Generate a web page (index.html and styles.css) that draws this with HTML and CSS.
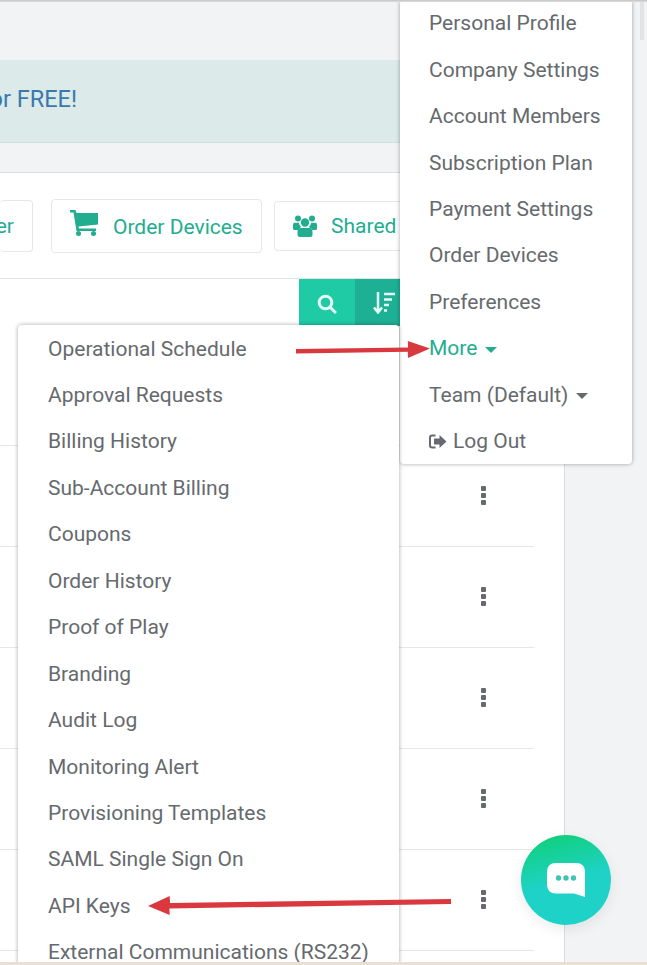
FILE: index.html
```html
<!DOCTYPE html>
<html lang="en">
<head>
<meta charset="utf-8">
<title>Account menu</title>
<link rel="stylesheet" href="styles.css">
</head>
<body>
<div class="page">
  <div class="topline"></div>
  <section class="banner"><p class="banner-text"><span>or FREE!</span></p></section>
  <main class="panel">
    <div class="toolbar">
      <a class="tool tool-first"><span>er</span></a>
      <a class="tool tool-order">
        <svg class="cart" viewBox="0 0 28 26"><path d="M0 0h5.500l1 3H28v11.500L8.500 16.500l.4 2H26v2.500H6.500L3.500 2.500H0z"/><circle cx="8.500" cy="23.500" r="2.500"/><circle cx="23.500" cy="23.500" r="2.500"/></svg>
        <span class="tool-label">Order Devices</span>
      </a>
      <a class="tool tool-shared">
        <svg class="users" viewBox="0 0 24 22"><circle cx="5" cy="3.500" r="3"/><circle cx="19" cy="3.500" r="3"/><circle cx="12" cy="7.500" r="4.200"/><path d="M0 9.500q0-1.800 1.800-1.800h4q.6 3 2.500 4.400Q5.500 13 4.900 15H1.500Q0 15 0 13.500zM24 9.500q0-1.800-1.800-1.800h-4q-.6 3-2.500 4.400 2.800.9 3.400 2.900h3.400q1.500 0 1.500-1.500zM7.500 13h9q3 0 3 4v2.500q0 2.500-2.500 2.500H7q-2.500 0-2.500-2.500V17q0-4 3-4z"/></svg>
        <span>Shared</span>
      </a>
    </div>
    <div class="table-head">
      <button class="head-btn head-search" aria-label="Search">
        <svg viewBox="0 0 20 20"><circle cx="8.500" cy="8.500" r="6.300"/><path d="M13 13l6 6"/></svg>
      </button>
      <button class="head-btn head-sort" aria-label="Sort">
        <svg viewBox="0 0 22 22"><path d="M5 0v19M1 15.500L5 20.500l4-5"/><path class="bars" d="M11 2h11M11 7.500h8M11 13h5M11 18.500h3"/></svg>
      </button>
    </div>
    <div class="row row-first"></div>
    <div class="row"><button class="kebab" aria-label="Actions"><i></i><i></i><i></i></button></div>
    <div class="row"><button class="kebab" aria-label="Actions"><i></i><i></i><i></i></button></div>
    <div class="row"><button class="kebab" aria-label="Actions"><i></i><i></i><i></i></button></div>
    <div class="row"><button class="kebab" aria-label="Actions"><i></i><i></i><i></i></button></div>
    <div class="row"><button class="kebab" aria-label="Actions"><i></i><i></i><i></i></button></div>
  </main>

  <nav class="menu menu-account">
    <a>Personal Profile</a>
    <a>Company Settings</a>
    <a>Account Members</a>
    <a>Subscription Plan</a>
    <a>Payment Settings</a>
    <a>Order Devices</a>
    <a>Preferences</a>
    <a class="active">More <b class="caret"></b></a>
    <a>Team (Default) <b class="caret"></b></a>
    <a class="logout">
      <svg viewBox="0 0 18 15"><path class="door" d="M6.500 1.500H3.200Q1 1.500 1 3.700v7.600q0 2.200 2.200 2.200h3.300"/><path d="M10.500 1l7 6.500-7 6.500V10.500H5v-6h5.500z"/></svg>
      Log Out
    </a>
  </nav>

  <nav class="menu menu-more">
    <a>Operational Schedule</a>
    <a>Approval Requests</a>
    <a>Billing History</a>
    <a>Sub-Account Billing</a>
    <a>Coupons</a>
    <a>Order History</a>
    <a>Proof of Play</a>
    <a>Branding</a>
    <a>Audit Log</a>
    <a>Monitoring Alert</a>
    <a>Provisioning Templates</a>
    <a>SAML Single Sign On</a>
    <a>API Keys</a>
    <a>External Communications (RS232)</a>
  </nav>

  <svg class="arrows" viewBox="0 0 647 965">
    <path d="M296 349L408 347.500l-.2-6.500L430 348.500l-22 9.500-.2-6.300L296 353.500z"/>
    <path d="M451 899L170 903l-.3-7L148 906l21.700 9-.3-6.500 281.600-4.500z"/>
  </svg>

  <button class="chat" aria-label="Chat">
    <svg viewBox="0 0 38 34"><path d="M9 0h20q9 0 9 9v25l-11-3.500H9q-9 0-9-9V9q0-9 9-9z"/><circle class="dot" cx="11.500" cy="15" r="2.700"/><circle class="dot" cx="19" cy="15" r="2.700"/><circle class="dot" cx="26.500" cy="15" r="2.700"/></svg>
  </button>

  <div class="thumb"></div>
  <div class="bottomline"></div>
</div>
</body>
</html>
```
FILE: styles.css
```css
* { box-sizing: border-box; }
html, body { margin: 0; padding: 0; }
body { font-family: Roboto, "Liberation Sans", sans-serif; color: #666a6e; }
.page { position: relative; width: 647px; height: 965px; overflow: hidden; background: #f2f3f5; padding-top: 60px; }
.topline { position: absolute; z-index: 5; left: 0; top: 0; width: 100%; height: 2px; background: linear-gradient(#c4c4c4, #dedede); }
.banner { height: 83px; width: 420px; background: #dceaea; border-bottom: 1px solid #d3dfdf; display: flex; align-items: center; padding-bottom: 4px; }
.banner-text { margin: 0; width: 77px; display: flex; justify-content: flex-end; white-space: nowrap; font-size: 23.500px; color: #3b78ad; }
.panel { margin-top: 29px; width: 565px; height: 793px; background: #fff; border-top: 1px solid #dcdcdc; border-right: 1px solid #dcdcdc; }
.toolbar { height: 105px; display: flex; align-items: center; gap: 18px; }
.tool { display: flex; align-items: center; background: #fff; border: 1px solid #e6e7e8; border-radius: 4px; color: #22ad90; font-size: 21px; white-space: nowrap; }
.tool-first { width: 33px; height: 52px; justify-content: flex-end; border-left: 0; }
.tool-first span { padding-right: 18px; }
.tool-order { width: 211px; height: 54px; padding-left: 18px; gap: 15px; }
.tool-label { margin-top: 2px; }
.tool-shared { width: 160px; height: 50px; margin-left: -6px; padding-left: 18px; gap: 14px; }
.cart { width: 28px; height: 26px; fill: #22ad90; margin-top: -5px; }
.users { width: 24px; height: 22px; fill: #22ad90; }
.table-head { height: 51px; border-top: 1px solid #e3e4e5; display: flex; align-items: flex-start; padding-left: 299px; margin-right: 150px; }
.head-btn { border: 0; padding: 0; height: 47px; display: flex; align-items: center; justify-content: center; }
.head-search { width: 56px; background: #1ecba5; }
.head-search svg { width: 20px; height: 20px; fill: none; stroke: #e6fbf6; stroke-width: 3; margin-top: 3px; }
.head-sort { width: 56px; background: #1eb094; justify-content: flex-start; padding-left: 18px; }
.head-sort svg { width: 22px; height: 22px; fill: none; stroke: #e6fbf6; stroke-width: 2.500; }
.row { height: 101px; margin-right: 30px; border-bottom: 1px solid #e6e7e8; display: flex; align-items: center; justify-content: flex-end; padding-right: 46px; }
.row-first { height: 117px; }
.kebab { border: 0; background: none; padding: 0; width: 9px; display: flex; flex-direction: column; align-items: center; gap: 2px; margin-top: -1px; }
.kebab i { width: 5px; height: 5px; border-radius: 1px; background: #666a6e; }
.menu { position: absolute; display: flex; flex-direction: column; background: #fff; border-radius: 4px; box-shadow: 0 0 4px rgba(0, 0, 0, .35); z-index: 2; }
.menu a { height: 46.450px; flex: none; display: flex; align-items: center; gap: 6px; font-size: 21px; white-space: nowrap; }
.menu-account { left: 400px; top: 0; width: 232px; padding-left: 29px; height: 464px; }
.menu-more { left: 18px; top: 325px; width: 381px; height: 660px; padding: .4px 0 0 30px; }
.menu a.active { color: #22ad90; }
.caret { width: 0; height: 0; border-left: 6.500px solid transparent; border-right: 6.500px solid transparent; border-top: 6px solid currentColor; margin-left: 2px; margin-top: 3px; }
.logout svg { width: 18px; height: 15px; fill: #666a6e; }
.logout .door { fill: none; stroke: #666a6e; stroke-width: 2; }
.arrows { position: absolute; left: 0; top: 0; width: 647px; height: 965px; z-index: 3; fill: #d9383e; pointer-events: none; }
.chat { position: absolute; z-index: 4; left: 521px; top: 835px; width: 90px; height: 90px; border: 0; padding: 0; border-radius: 50%; background: linear-gradient(165deg, #10d07e 8%, #1fd2c8 52%); box-shadow: 0 4px 14px rgba(0, 0, 0, .08); display: flex; align-items: center; justify-content: center; }
.chat svg { width: 38px; height: 34px; fill: #fff; }
.chat .dot { fill: #3fc4b4; }
.thumb { position: absolute; left: 640px; top: 0; width: 4px; height: 40px; background: #e2e3e6; }
.bottomline { position: absolute; z-index: 5; left: 0; bottom: 0; width: 100%; height: 3px; background: #e9dfd2; }
```
